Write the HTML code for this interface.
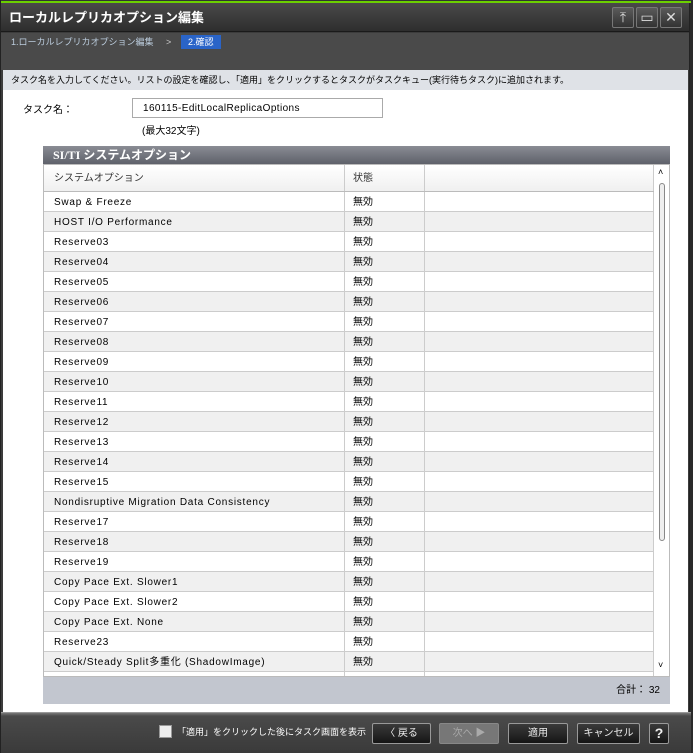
<!DOCTYPE html>
<html><head><meta charset="utf-8"><style>
*{margin:0;padding:0;box-sizing:border-box}
body{width:693px;height:753px;overflow:hidden;background:#2a2a2a;font-family:"Liberation Sans","Noto Sans CJK JP",sans-serif;font-size:11px;position:relative}
.win{position:absolute;left:0;top:0;width:690px;height:753px;background:#3c3c3c;border-left:1px solid #222;border-right:1px solid #222}
.green{position:absolute;left:0;top:0;width:690px;height:3px;background:#6cd000;border-top:1px solid #333}
.title{position:absolute;left:0;top:3px;width:688px;height:29px;background:linear-gradient(#4a4a4a,#2e2e2e);color:#fff;font-weight:bold;font-size:13px;line-height:16px;padding:7px 0 0 8px;border-bottom:1px solid #1a1a1a}
.tb{position:absolute;top:7px;width:22px;height:21px;border:1px solid #777;border-radius:2px;background:linear-gradient(#5a5a5a,#333);color:#ddd;text-align:center;font-size:14px;line-height:19px}
.crumb{position:absolute;left:0;top:33px;width:688px;height:37px;background:#4a4a4a;color:#bcd;font-size:9px;line-height:14px}
.crumb span{position:absolute;top:2px}
.step{background:#2a64c8;color:#fff;padding:0 7px;}
.band{position:absolute;left:2px;top:70px;width:685px;height:20px;background:#dfe2e7;color:#000;font-size:9px;line-height:12px;padding:4px 0 0 8px;white-space:nowrap}
.content{position:absolute;left:2px;top:90px;width:685px;height:622px;background:#fff}
.lbl{position:absolute;left:20px;top:11px;font-size:10px}
.inp{position:absolute;left:131px;top:98px;width:251px;height:20px;border:1px solid #aaa;background:#fff;font-size:10px;letter-spacing:0.4px;padding:4px 0 0 10px;line-height:12px}
.hint{position:absolute;left:141px;top:122px;font-size:10px}
.panel{position:absolute;left:42px;top:146px;width:627px;height:558px}
.ph{height:18px;background:linear-gradient(#8a8c94,#5e616a);color:#fff;font-weight:bold;font-size:12px;line-height:15px;padding:2px 0 0 10px;font-family:"Liberation Serif","Noto Sans CJK JP",serif}
.tbl{position:absolute;left:0;top:18px;width:627px;height:513px;border:1px solid #bbb;background:#fff;overflow:hidden}
.row{height:20px;border-bottom:1px solid #ccc;display:flex;font-size:10px;line-height:12px;letter-spacing:0.75px;width:610px}
.row div{padding:5px 0 0 10px;border-right:1px solid #ccc;white-space:nowrap}
.c1{width:301px}.c2{width:80px;padding-left:8px!important;letter-spacing:0}.c3{width:229px}
.row.g{background:#f0f0f0}
.hdr{height:27px;background:linear-gradient(#fff,#f0f0f0);border-bottom:1px solid #bbb;color:#333;letter-spacing:0}
.hdr div{padding-top:8px}
.sb{position:absolute;left:610px;top:0;width:16px;height:513px;background:#fff}
.thumb{position:absolute;left:5px;top:18px;width:6px;height:358px;border:1px solid #888;border-radius:3px;background:#eee}
.foot{position:absolute;left:0;top:531px;width:627px;height:27px;background:#c2c6cf;font-size:10px;text-align:right;padding:8px 10px 0 0;line-height:12px}
.bot{position:absolute;left:0;top:712px;width:690px;height:41px;background:linear-gradient(#777 0,#4a4a4a 3px,#3a3a3a);border-top:1px solid #999}
.btn{position:absolute;top:10px;height:21px;border:1px solid #999;border-radius:2px;background:linear-gradient(#3a3a3a,#151515);color:#eee;font-size:10px;text-align:center;line-height:19px}
</style></head><body>
<div class="win">
<div class="green"></div>
<div class="title">ローカルレプリカオプション編集</div>
<div class="tb" style="left:611px">⤒</div>
<div class="tb" style="left:635px">▭</div>
<div class="tb" style="left:659px">✕</div>
<div class="crumb"><span style="left:10px">1.ローカルレプリカオプション編集</span><span style="left:165px;color:#ccc">&gt;</span><span class="step" style="left:180px">2.確認</span></div>
<div class="band">タスク名を入力してください。リストの設定を確認し、「適用」をクリックするとタスクがタスクキュー(実行待ちタスク)に追加されます。</div>
<div class="content"><div class="lbl">タスク名：</div></div>
<div class="inp">160115-EditLocalReplicaOptions</div>
<div class="hint">(最大32文字)</div>
<div class="panel">
<div class="ph">SI/TI システムオプション</div>
<div class="tbl">
<div class="row hdr"><div class="c1">システムオプション</div><div class="c2">状態</div><div class="c3"></div></div>
<div class="row"><div class="c1">Swap &amp; Freeze</div><div class="c2">無効</div><div class="c3"></div></div>
<div class="row g"><div class="c1">HOST I/O Performance</div><div class="c2">無効</div><div class="c3"></div></div>
<div class="row"><div class="c1">Reserve03</div><div class="c2">無効</div><div class="c3"></div></div>
<div class="row g"><div class="c1">Reserve04</div><div class="c2">無効</div><div class="c3"></div></div>
<div class="row"><div class="c1">Reserve05</div><div class="c2">無効</div><div class="c3"></div></div>
<div class="row g"><div class="c1">Reserve06</div><div class="c2">無効</div><div class="c3"></div></div>
<div class="row"><div class="c1">Reserve07</div><div class="c2">無効</div><div class="c3"></div></div>
<div class="row g"><div class="c1">Reserve08</div><div class="c2">無効</div><div class="c3"></div></div>
<div class="row"><div class="c1">Reserve09</div><div class="c2">無効</div><div class="c3"></div></div>
<div class="row g"><div class="c1">Reserve10</div><div class="c2">無効</div><div class="c3"></div></div>
<div class="row"><div class="c1">Reserve11</div><div class="c2">無効</div><div class="c3"></div></div>
<div class="row g"><div class="c1">Reserve12</div><div class="c2">無効</div><div class="c3"></div></div>
<div class="row"><div class="c1">Reserve13</div><div class="c2">無効</div><div class="c3"></div></div>
<div class="row g"><div class="c1">Reserve14</div><div class="c2">無効</div><div class="c3"></div></div>
<div class="row"><div class="c1">Reserve15</div><div class="c2">無効</div><div class="c3"></div></div>
<div class="row g"><div class="c1">Nondisruptive Migration Data Consistency</div><div class="c2">無効</div><div class="c3"></div></div>
<div class="row"><div class="c1">Reserve17</div><div class="c2">無効</div><div class="c3"></div></div>
<div class="row g"><div class="c1">Reserve18</div><div class="c2">無効</div><div class="c3"></div></div>
<div class="row"><div class="c1">Reserve19</div><div class="c2">無効</div><div class="c3"></div></div>
<div class="row g"><div class="c1">Copy Pace Ext. Slower1</div><div class="c2">無効</div><div class="c3"></div></div>
<div class="row"><div class="c1">Copy Pace Ext. Slower2</div><div class="c2">無効</div><div class="c3"></div></div>
<div class="row g"><div class="c1">Copy Pace Ext. None</div><div class="c2">無効</div><div class="c3"></div></div>
<div class="row"><div class="c1">Reserve23</div><div class="c2">無効</div><div class="c3"></div></div>
<div class="row g"><div class="c1">Quick/Steady Split多重化 (ShadowImage)</div><div class="c2">無効</div><div class="c3"></div></div>
<div class="row"><div class="c1"></div><div class="c2"></div><div class="c3"></div></div>
<div class="sb"><div style="position:absolute;left:4px;top:2px;font-size:9px">˄</div><div class="thumb"></div><div style="position:absolute;left:4px;top:495px;font-size:9px">˅</div></div>
</div>
<div class="foot">合計：  32</div>
</div>
<div class="bot">
<div style="position:absolute;left:158px;top:12px;width:13px;height:13px;background:#eee;border:1px solid #999"></div>
<div style="position:absolute;left:176px;top:13px;color:#fff;font-size:9px;line-height:12px;white-space:nowrap">「適用」をクリックした後にタスク画面を表示</div>
<div class="btn" style="left:371px;width:59px">〈 戻る</div>
<div class="btn" style="left:438px;width:60px;background:#777;color:#aaa;border-color:#888">次へ ▶</div>
<div class="btn" style="left:507px;width:60px">適用</div>
<div class="btn" style="left:576px;width:63px">キャンセル</div>
<div class="btn" style="left:648px;width:20px;font-weight:bold;font-size:14px">?</div>
</div>
</div>
</body></html>
